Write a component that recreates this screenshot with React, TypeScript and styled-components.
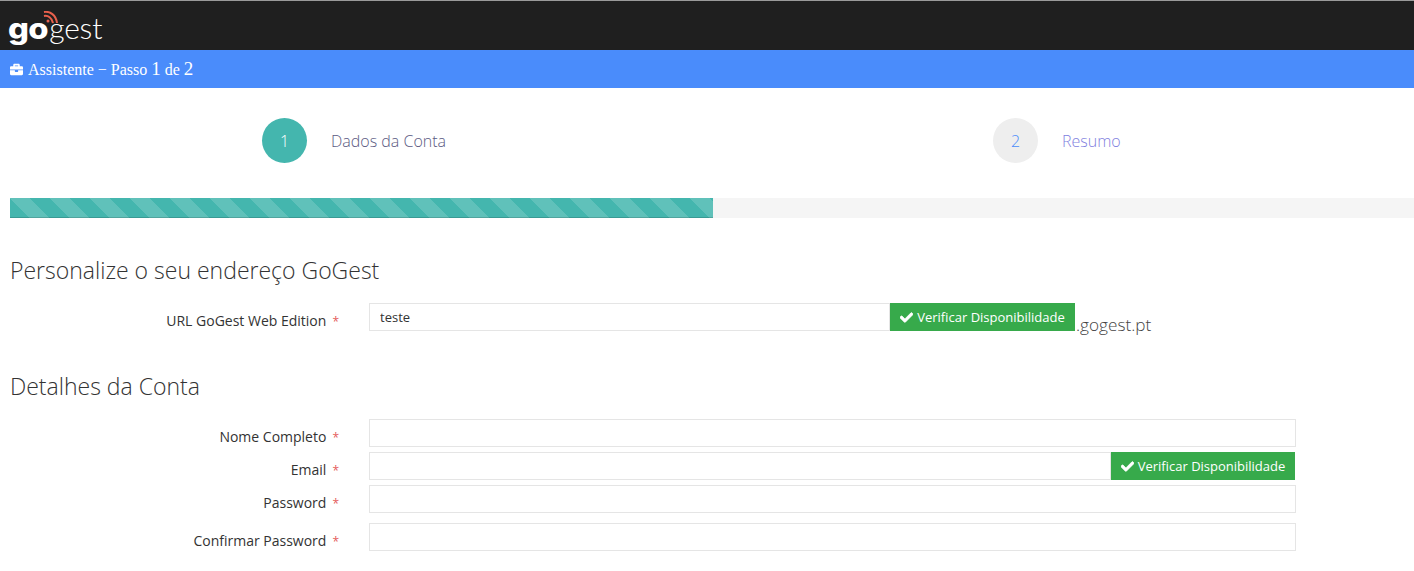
import React from "react"
import styled, { createGlobalStyle } from "styled-components"
import { FaBriefcase, FaCheck } from "react-icons/fa"

const GlobalStyle = createGlobalStyle`
  html, body {
    margin: 0;
    padding: 0;
    background: #ffffff;
    font-family: "Open Sans", sans-serif;
    overflow: hidden;
  }
  * {
    box-sizing: border-box;
  }
`

const TopBar = styled.header`
  height: 50px;
  background: #1f1f1f;
  border-top: 1px solid #9a9a9a;
  padding: 10px 0 0 8px;
`

const Logo = styled.div`
  position: relative;
  display: flex;
  align-items: baseline;
  width: 96px;
  height: 32px;
  color: #ffffff;
  line-height: 32px;
`

const LogoGo = styled.span`
  font-family: "Inter", sans-serif;
  font-weight: 800;
  font-size: 28px;
  letter-spacing: -0.5px;
  transform: scaleX(1.17);
  transform-origin: left;
  margin-right: 7px;
`

const LogoGest = styled.span`
  font-family: "Lato", sans-serif;
  font-weight: 300;
  font-size: 30px;
  letter-spacing: -0.2px;
`

const LogoSignal = styled.svg`
  position: absolute;
  left: 35px;
  top: 0;
`

const TitleBar = styled.div`
  height: 38px;
  background: #4a8cfb;
  color: #ffffff;
  display: flex;
  align-items: center;
  padding: 1px 0 0 10px;
  font-family: "Liberation Serif", serif;
  font-size: 16px;
  gap: 5px;
`

const Digit = styled.span`
  font-size: 19px;
  line-height: 16px;
`

const Steps = styled.div`
  display: grid;
  grid-template-columns: 731px 1fr;
  padding: 30px 0 0 262px;
  height: 110px;
`

const Step = styled.div`
  display: flex;
  align-items: flex-start;
  gap: 24px;
`

const StepCircle = styled.div<{ $active?: boolean }>`
  width: 45px;
  height: 45px;
  border-radius: 50%;
  display: flex;
  align-items: center;
  justify-content: center;
  font-size: 16px;
  font-weight: 300;
  background: ${(p) => (p.$active ? "#44b6ae" : "#eeeeee")};
  color: ${(p) => (p.$active ? "#ffffff" : "#4a8cfb")};
`

const StepLabel = styled.div<{ $active?: boolean }>`
  font-size: 16px;
  font-weight: 300;
  line-height: 47px;
  color: ${(p) => (p.$active ? "#5b5a82" : "#7f7fe0")};
`

const Progress = styled.div`
  height: 20px;
  margin-left: 10px;
  background: #f5f5f5;
`

const ProgressFill = styled.div`
  height: 100%;
  background-color: #44b6ae;
  background-image: linear-gradient(
    45deg,
    rgba(255, 255, 255, 0.15) 25%,
    transparent 25%,
    transparent 50%,
    rgba(255, 255, 255, 0.15) 50%,
    rgba(255, 255, 255, 0.15) 75%,
    transparent 75%,
    transparent
  );
  background-size: 40px 40px;
  box-shadow: inset 0 -1px 0 rgba(0, 0, 0, 0.15);
`

const Form = styled.form`
  padding: 0 0 0 10px;
`

const SectionTitle = styled.h3<{ $top: number; $bottom: number }>`
  margin: ${(p) => p.$top}px 0 ${(p) => p.$bottom}px;
  font-size: 23px;
  line-height: 30px;
  font-weight: 300;
  color: #333333;
`

const Row = styled.div<{ $gap: number }>`
  display: grid;
  grid-template-columns: 317px 927px;
  column-gap: 42px;
  height: 28px;
  margin-bottom: ${(p) => p.$gap}px;
`

const Label = styled.label`
  font-size: 14px;
  line-height: 36px;
  color: #333333;
  text-align: right;
  white-space: nowrap;
  margin-right: -12px;
`

const Star = styled.span`
  color: #e45b5b;
  font-size: 12px;
  margin-left: 6px;
`

const Control = styled.div`
  display: flex;
  height: 28px;
`

const UrlControl = styled(Control)`
  flex: none;
  width: 706px;
`

const EmailControl = styled(Control)`
  margin-right: 1px;
`

const Input = styled.input`
  flex: 1;
  min-width: 0;
  height: 28px;
  border: 1px solid #e5e5e5;
  border-radius: 0;
  padding: 0 10px;
  outline: none;
  font-family: "Open Sans", sans-serif;
  font-size: 13px;
  color: #333333;
  background: #ffffff;
`

const CheckButton = styled.button<{ $width: number }>`
  flex: none;
  width: ${(p) => p.$width}px;
  height: 28px;
  border: none;
  border-radius: 0;
  padding: 0;
  background: #37aa4b;
  color: #ffffff;
  font-family: "Open Sans", sans-serif;
  font-size: 13px;
  display: flex;
  align-items: center;
  justify-content: center;
  gap: 4px;
`

const CheckIcon = styled(FaCheck)`
  stroke: #ffffff;
  stroke-width: 30px;
`

const Suffix = styled.span`
  font-size: 17.2px;
  font-weight: 300;
  color: #444444;
  line-height: 44px;
  padding-left: 1px;
  white-space: nowrap;
`

function App() {
  return (
    <>
      <GlobalStyle />
      <TopBar>
        <Logo>
          <LogoGo>go</LogoGo>
          <LogoGest>gest</LogoGest>
          <LogoSignal width="16" height="13" viewBox="0 0 16 13" fill="none" stroke="#e8604c" strokeWidth="2">
            <path d="M1 1 C7 0 13 4 14 12" />
            <path d="M1 5 C5 4 9 7 10 12" />
            <circle cx="5" cy="10" r="1.5" fill="#e8604c" stroke="none" />
          </LogoSignal>
        </Logo>
      </TopBar>
      <TitleBar>
        <FaBriefcase size={13} />
        <span>
          Assistente − Passo <Digit>1</Digit> de <Digit>2</Digit>
        </span>
      </TitleBar>
      <Steps>
        <Step>
          <StepCircle $active>1</StepCircle>
          <StepLabel $active>Dados da Conta</StepLabel>
        </Step>
        <Step>
          <StepCircle>2</StepCircle>
          <StepLabel>Resumo</StepLabel>
        </Step>
      </Steps>
      <Progress>
        <ProgressFill style={{ width: "703px" }} />
      </Progress>
      <Form>
        <SectionTitle $top={37} $bottom={18}>Personalize o seu endereço GoGest</SectionTitle>
        <Row $gap={0}>
          <Label>
            URL GoGest Web Edition<Star>*</Star>
          </Label>
          <Control>
            <UrlControl>
              <Input defaultValue="teste" />
              <CheckButton type="button" $width={185}>
                <CheckIcon size={13} />
                Verificar Disponibilidade
              </CheckButton>
            </UrlControl>
            <Suffix>.gogest.pt</Suffix>
          </Control>
        </Row>
        <SectionTitle $top={40} $bottom={18}>Detalhes da Conta</SectionTitle>
        <Row $gap={5}>
          <Label>
            Nome Completo<Star>*</Star>
          </Label>
          <Input />
        </Row>
        <Row $gap={5}>
          <Label>
            Email<Star>*</Star>
          </Label>
          <EmailControl>
            <Input />
            <CheckButton type="button" $width={184}>
              <CheckIcon size={13} />
              Verificar Disponibilidade
            </CheckButton>
          </EmailControl>
        </Row>
        <Row $gap={10}>
          <Label>
            Password<Star>*</Star>
          </Label>
          <Input type="password" />
        </Row>
        <Row $gap={0}>
          <Label>
            Confirmar Password<Star>*</Star>
          </Label>
          <Input type="password" />
        </Row>
      </Form>
    </>
  )
}

export default App
